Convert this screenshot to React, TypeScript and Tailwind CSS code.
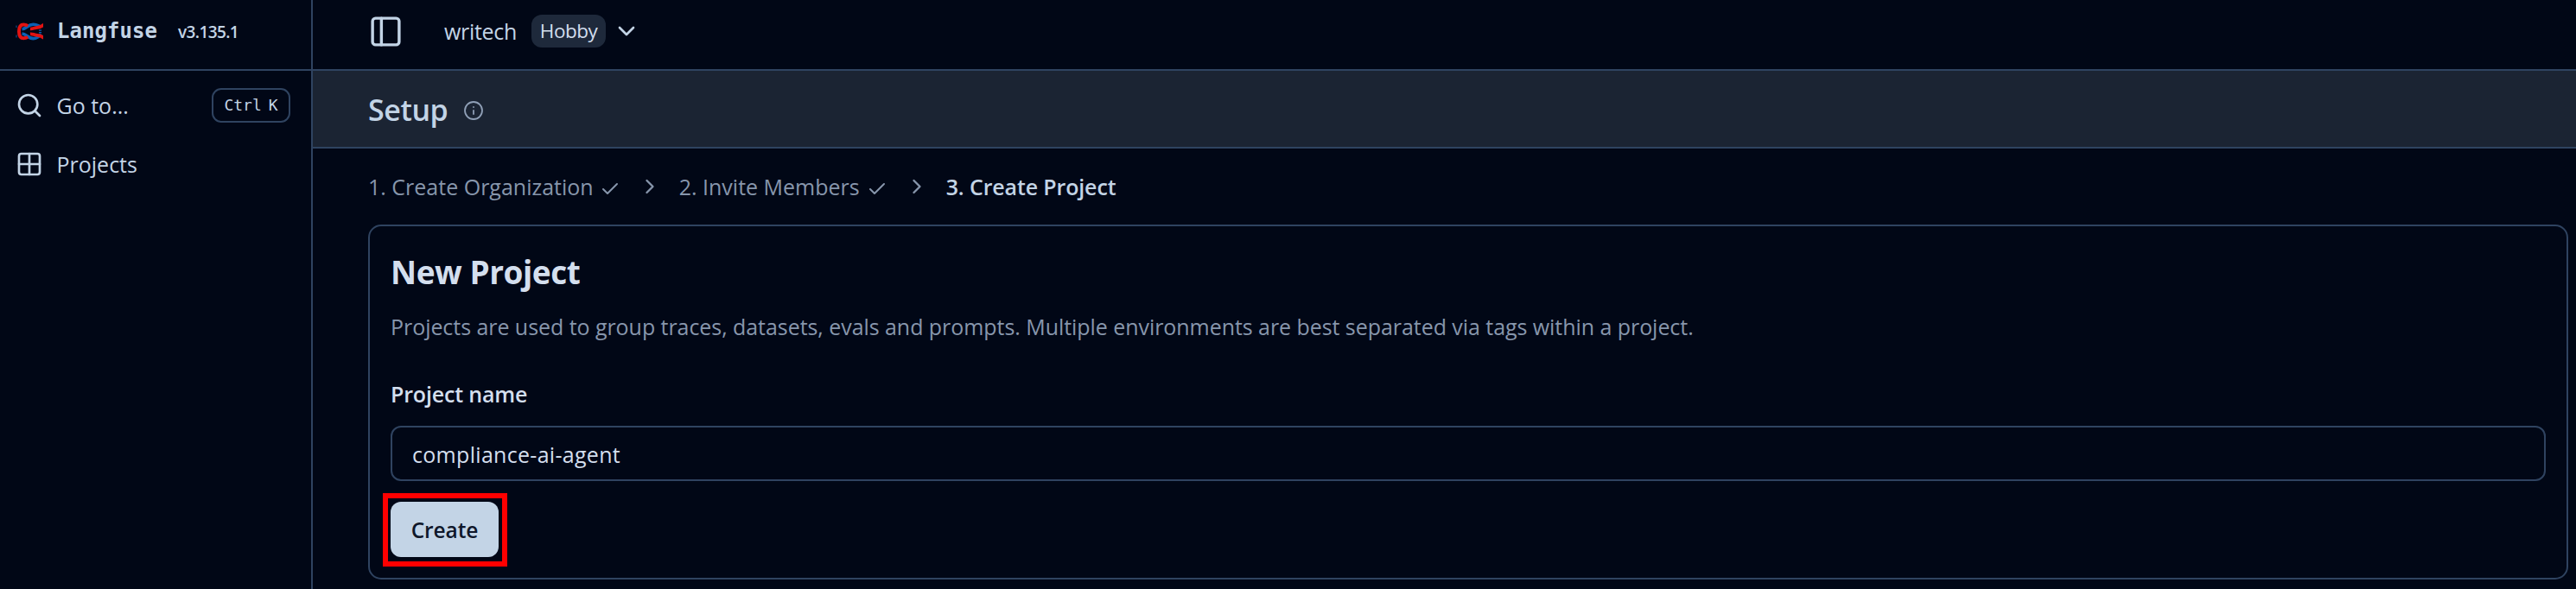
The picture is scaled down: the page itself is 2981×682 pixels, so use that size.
import React from "react";
import { Check, ChevronDown, ChevronRight, Grid2x2, Info, PanelLeft, Search } from "lucide-react";

function Logo() {
  return (
    <svg width="32" height="21" viewBox="0 0 32 21" fill="none" className="shrink-0">
      <path d="M1 3.5V6M1 14.5V17.5" stroke="#0a3f78" strokeWidth="1.4" />
      <path d="M7.5 7.8C12.5 7.6 14 2.2 20.5 2.2C24.5 2.2 26 3.6 28.5 4.6" stroke="#0a60b5" strokeWidth="3.6" />
      <path d="M7.5 13C12.5 13.2 14 18.6 20.5 18.6C24.5 18.6 27 16.8 29.5 13.5" stroke="#0a60b5" strokeWidth="3.6" />
      <path d="M27 9.2H30M27 11.6H30" stroke="#0a60b5" strokeWidth="1.2" />
      <path
        d="M14.2 3.9C12.5 2.9 11 2.6 9.3 2.6C5.5 2.6 4 6 4 10.4C4 14.8 5.5 18.2 9.3 18.2C11 18.2 12.5 17.9 14.2 16.9"
        stroke="#e11312"
        strokeWidth="4"
      />
      <path d="M17 7.4C20 7.7 21 6.4 24 6.1C27.5 5.8 30 5.2 33 2.4" stroke="#e11312" strokeWidth="3.8" />
      <path d="M17 13.4C20 13.1 21 14.3 24 14.6C27.5 14.9 30 15.4 33 18.2" stroke="#e11312" strokeWidth="3.8" />
    </svg>
  );
}

function Sidebar() {
  return (
    <aside className="flex w-[362px] shrink-0 flex-col border-r-2 border-[#2f4360]">
      <div className="flex h-[82px] items-center border-b-2 border-[#2f4360] pb-2 pl-[18px]">
        <Logo />
        <span className="ml-[16px] font-['DejaVu_Sans_Mono',monospace] text-[24px] leading-8 font-bold tracking-[0.05px]">
          Langfuse
        </span>
        <span className="mt-[2px] ml-[24px] text-[19px] leading-8 font-semibold tracking-[-0.6px]">v3.135.1</span>
      </div>
      <nav className="flex flex-col gap-1 pt-2">
        <div className="flex h-16 items-center gap-[15.5px] pr-6 pl-[18px]">
          <Search size={32} strokeWidth={2} />
          <span>Go to...</span>
          <kbd className="ml-auto flex h-10 w-[91px] items-center justify-center gap-[8px] rounded-[11px] border-2 border-[#2f4360] font-['DejaVu_Sans_Mono',monospace] text-[18px] leading-none">
            <span>Ctrl</span>
            <span>K</span>
          </kbd>
        </div>
        <div className="flex h-16 items-center gap-[15.5px] pl-[18px]">
          <Grid2x2 size={32} strokeWidth={2} />
          <span>Projects</span>
        </div>
      </nav>
    </aside>
  );
}

function TopBar() {
  return (
    <header className="flex h-[82px] items-center border-b-2 border-[#2f4360] pb-2 pl-16">
      <PanelLeft size={41} strokeWidth={2} className="shrink-0" />
      <span className="ml-[47px] tracking-[-0.3px]">writech</span>
      <span className="ml-[17px] flex h-[38px] w-[86px] items-center justify-center rounded-[12px] bg-[#1e293b] text-[22.5px] leading-none tracking-[-0.5px] text-[#d3deed]">
        Hobby
      </span>
      <ChevronDown size={32} strokeWidth={2} className="ml-[8px]" />
    </header>
  );
}

function Steps() {
  return (
    <ol className="flex h-8 items-center text-[#8796ac]">
      <li className="flex items-center gap-[7px]">
        <span>1. Create Organization</span>
        <Check size={24} strokeWidth={2} className="mt-[5px]" />
      </li>
      <ChevronRight size={28} strokeWidth={2} className="mx-5" />
      <li className="flex items-center gap-[8px]">
        <span>2. Invite Members</span>
        <Check size={24} strokeWidth={2} className="mt-[5px]" />
      </li>
      <ChevronRight size={28} strokeWidth={2} className="mx-5" />
      <li className="font-semibold tracking-[-0.14px] text-[#c3d4e6]">3. Create Project</li>
    </ol>
  );
}

function ProjectForm() {
  return (
    <section className="mt-7 flex flex-col items-start rounded-[15px] border-2 border-[#2f4360] px-6 pt-7 pb-6 text-[#d4dfee]">
      <h2 className="text-[37px] leading-[49px] font-bold tracking-[-0.45px]">New Project</h2>
      <p className="mt-[21px] leading-9 tracking-[-0.055px] text-[#8796ac]">
        Projects are used to group traces, datasets, evals and prompts. Multiple environments are best separated via
        tags within a project.
      </p>
      <label htmlFor="name" className="mt-11 leading-8 font-semibold tracking-[-0.16px]">
        Project name
      </label>
      <input
        id="name"
        defaultValue="compliance-ai-agent"
        className="mt-[21px] h-16 w-full rounded-[12px] border-2 border-[#2f4360] bg-transparent px-[23px] pt-[2px] tracking-[0.3px] outline-none"
      />
      <div className="relative mt-6">
        <button className="h-16 w-[125px] rounded-[12px] bg-[#c3d4e6] pt-[2px] text-[24.5px] font-semibold tracking-[-0.1px] text-[#0f172a]">
          Create
        </button>
        <div className="pointer-events-none absolute -top-[10px] -left-[9px] h-[85px] w-36 border-[6px] border-[#ff0000]" />
      </div>
    </section>
  );
}

export default function App() {
  return (
    <div className="flex h-[682px] w-full overflow-hidden bg-[#010716] font-['Open_Sans',sans-serif] text-[25px] leading-8 text-[#c3d4e6]">
      <Sidebar />
      <main className="min-w-0 flex-1">
        <TopBar />
        <div className="flex h-[90px] items-center border-b-2 border-[#2f4360] bg-[#1b2433] pl-16">
          <h1 className="mt-[2px] text-[34px] leading-none font-semibold tracking-[-0.45px]">Setup</h1>
          <Info size={24} strokeWidth={1.8} className="mt-1 ml-[18px] text-[#8f9fb6]" />
        </div>
        <div className="pt-7 pr-[9px] pl-16">
          <Steps />
          <ProjectForm />
        </div>
      </main>
    </div>
  );
}
